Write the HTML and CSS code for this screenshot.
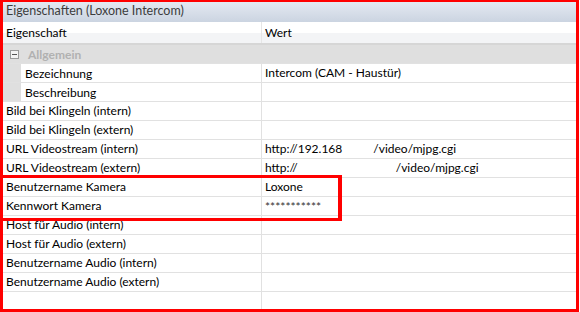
FILE: index.html
```html
<!DOCTYPE html>
<html lang="de">
<head>
  <meta charset="UTF-8" />
  <title>Eigenschaften (Loxone Intercom)</title>
  <link rel="stylesheet" href="styles.css">
</head>
<body>
  <div class="screen">
    <div class="panel">
      <div class="title">Eigenschaften (Loxone Intercom)</div>

      <div class="row head">
        <div class="cell">Eigenschaft</div>
        <div class="cell val">Wert</div>
      </div>

      <div class="row group">
        <div class="cell">
          <svg class="toggle" width="9" height="9" viewBox="0 0 9 9">
            <rect x="0.5" y="0.5" width="8" height="8" fill="#f4f4f4" stroke="#9a9a9a" />
            <line x1="2" y1="4.5" x2="7" y2="4.5" stroke="#555" />
          </svg>
          <span class="group-name">Allgemein</span>
        </div>
        <div class="cell val"></div>
      </div>

      <div class="row child">
        <div class="cell"><span class="indent"></span>Bezeichnung</div>
        <div class="cell val">Intercom (CAM - Haustür)</div>
      </div>
      <div class="row child">
        <div class="cell"><span class="indent"></span>Beschreibung</div>
        <div class="cell val"></div>
      </div>

      <div class="row">
        <div class="cell">Bild bei Klingeln (intern)</div>
        <div class="cell val"></div>
      </div>
      <div class="row">
        <div class="cell">Bild bei Klingeln (extern)</div>
        <div class="cell val"></div>
      </div>
      <div class="row">
        <div class="cell">URL Videostream (intern)</div>
        <div class="cell val">http://192.168<span class="gap gap-int"></span>/video/mjpg.cgi</div>
      </div>
      <div class="row">
        <div class="cell">URL Videostream (extern)</div>
        <div class="cell val">http://<span class="gap gap-ext"></span>/video/mjpg.cgi</div>
      </div>
      <div class="row">
        <div class="cell">Benutzername Kamera</div>
        <div class="cell val">Loxone</div>
      </div>
      <div class="row">
        <div class="cell">Kennwort Kamera</div>
        <div class="cell val pw">***********</div>
      </div>
      <div class="row">
        <div class="cell">Host für Audio (intern)</div>
        <div class="cell val"></div>
      </div>
      <div class="row">
        <div class="cell">Host für Audio (extern)</div>
        <div class="cell val"></div>
      </div>
      <div class="row">
        <div class="cell">Benutzername Audio (intern)</div>
        <div class="cell val"></div>
      </div>
      <div class="row">
        <div class="cell">Benutzername Audio (extern)</div>
        <div class="cell val"></div>
      </div>
      <div class="row">
        <div class="cell"></div>
        <div class="cell val"></div>
      </div>
    </div>

    <!-- red marker drawn over the camera login rows -->
    <div class="marker"></div>
  </div>
</body>
</html>
```

FILE: styles.css
```css
* {
  box-sizing: border-box;
}

body {
  margin: 0;
  background: #fff;
  font-family: "Segoe UI", Lato, "Liberation Sans", sans-serif;
  font-size: 12px;
  color: #000;
}

.screen {
  position: relative;
  width: 580px;
  height: 312px;
}

.panel {
  width: 579px;
  height: 312px;
  border: 3px solid #ff0000;
  border-top-width: 2px;
  overflow: hidden;
  background: #fff;
}

.title {
  height: 20px;
  line-height: 18px;
  padding-left: 3px;
  font-size: 12.5px;
  color: #3c3c3c;
  background: linear-gradient(#e4e9f1, #cbd4e1);
}

.row {
  display: grid;
  grid-template-columns: 258px 1fr;
  height: 19px;
  border-bottom: 1px solid #e1e1e1;
}

.cell {
  display: flex;
  align-items: center;
  padding-left: 3px;
  padding-bottom: 1px;
  white-space: nowrap;
  overflow: hidden;
}

.cell.val {
  border-left: 1px solid #e1e1e1;
}

.row.head {
  height: 23px;
  border-bottom: 2px solid #d6d6d6;
  background: linear-gradient(#fff 50%, #f3f4f6 50%);
}

.row.head .cell.val {
  border-left-color: #e6e6e6;
}

.row.group {
  background: #dfdfdf;
}

.row.group .cell {
  padding-bottom: 0;
}

.row.group .cell.val {
  border-left: none;
}

.toggle {
  margin-left: 4px;
  margin-right: 9px;
}

.group-name {
  font-weight: bold;
  color: #b1b1b1;
}

.row.child .cell:first-child {
  padding-left: 0;
  padding-bottom: 0;
}

.indent {
  align-self: stretch;
  width: 18px;
  margin-right: 4px;
  background: #dfdfdf;
}

.gap {
  display: inline-block;
}

.gap-int {
  width: 31px;
}

.gap-ext {
  width: 98px;
}

.pw {
  color: #333;
  padding-top: 2px;
}

.marker {
  position: absolute;
  left: 0;
  top: 175px;
  width: 342px;
  height: 46px;
  border: 3px solid #ff0000;
  border-right-width: 4px;
}
```
